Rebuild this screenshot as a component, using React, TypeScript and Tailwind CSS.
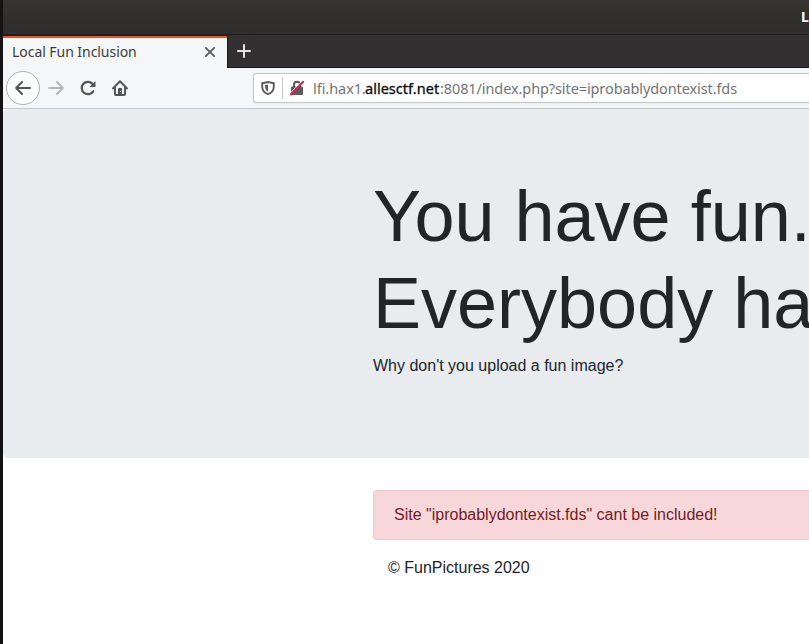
import React from 'react';

function TitleBar() {
  return (
    <div className="flex h-[35px] shrink-0 items-center overflow-hidden border-b border-[#1f1d1d] bg-linear-to-b from-[#353432] to-[#2f2d2d] pl-[798px]">
      <span className="font-['Noto_Sans',sans-serif] text-[14px] leading-none font-bold whitespace-nowrap text-white">Local Fun Inclusion</span>
    </div>
  );
}

function TabStrip() {
  return (
    <div className="flex h-[33px] shrink-0 bg-[#323030]">
      <div className="flex w-[224px] flex-col border-t border-[#1f1d1d] bg-[#f5f6f8]">
        <div className="h-[2px] shrink-0 bg-[#e95420]" />
        <div className="flex h-[28px] items-center justify-between pr-[11px] pl-[9px]">
          <span className="mb-px font-['Noto_Sans',sans-serif] text-[14px] leading-none tracking-[-0.05px] whitespace-nowrap text-[#3c3c3c]">Local Fun Inclusion</span>
          <svg width="12" height="12" viewBox="0 0 12 12" fill="none" stroke="#5a5a5a" strokeWidth="1.8" strokeLinecap="round">
            <path d="M1.800 1.800 10.200 10.200M10.200 1.800 1.800 10.200" />
          </svg>
        </div>
      </div>
      <div className="flex flex-1 border-b border-l border-[#1c1a1a] pt-[9px] pl-[9px]">
        <svg width="14" height="14" viewBox="0 0 14 14" fill="none" stroke="#e4e4e3" strokeWidth="2" strokeLinecap="round">
          <path d="M7 1v12M1 7h12" />
        </svg>
      </div>
    </div>
  );
}

function NavButtons() {
  return (
    <div className="flex w-[250px] shrink-0 items-center pl-[3px]">
      <div className="flex size-[34px] items-center justify-center rounded-full border border-[#b1b1b1] bg-[#fdfefe]">
        <svg width="16" height="16" viewBox="0 0 16 16" fill="none" stroke="#545454" strokeWidth="2" strokeLinecap="round" strokeLinejoin="round">
          <path d="M15 8H1.500M7 2 1.200 8 7 14" />
        </svg>
      </div>
      <svg className="ml-[8px]" width="16" height="16" viewBox="0 0 16 16" fill="none" stroke="#b5b6b7" strokeWidth="2" strokeLinecap="round" strokeLinejoin="round">
        <path d="M1 8h13.500M9 2l5.800 6L9 14" />
      </svg>
      <svg className="ml-[16px]" width="16" height="16" viewBox="0 0 16 16">
        <path d="M13.200 11.300A6.200 6.200 0 1 1 12.500 3.800" fill="none" stroke="#545454" strokeWidth="2.200" strokeLinecap="round" />
        <path d="M15.500 1v5.500a.6.6 0 0 1-.6.6H9.400z" fill="#545454" />
      </svg>
      <svg className="ml-[16px]" width="16" height="16" viewBox="0 0 16 16">
        <path d="M1 8.400 8 1.300l7 7.100M3 7.500V14a1 1 0 0 0 1 1h8a1 1 0 0 0 1-1V7.500" fill="none" stroke="#545454" strokeWidth="2" strokeLinecap="round" strokeLinejoin="round" />
        <path d="M6 15V9a1 1 0 0 1 1-1h2a1 1 0 0 1 1 1v6z" fill="#545454" />
        <path d="M8 11h1v1H8z" fill="#f5f6f8" />
      </svg>
    </div>
  );
}

function AddressBar() {
  return (
    <div className="flex h-[30px] flex-1 items-center overflow-hidden rounded-l-[3px] border border-r-0 border-[#c3c6ca] bg-white pl-[7px] shadow-[0_1px_3px_rgba(0,0,0,0.05)]">
      <svg className="shrink-0" width="14" height="14" viewBox="0 0 14 14">
        <path d="M7 1 12.800 2.200v3.500c0 3.500-2 6-5.800 7.500C3.200 11.700 1.200 9.200 1.200 5.700V2.200z" fill="none" stroke="#5b5b5b" strokeWidth="1.900" strokeLinejoin="round" />
        <path d="M7 3.500v7C5 9.400 4.100 7.800 4.100 5.700V4.100z" fill="#5b5b5b" />
      </svg>
      <div className="ml-[7px] h-[22px] w-px shrink-0 bg-[#c3c6ca]" />
      <svg className="ml-[7px] shrink-0" width="14" height="16" viewBox="0 0 14 16">
        <path d="M4 7V4.800a3 3 0 0 1 6 0V7" fill="none" stroke="#5b5b5b" strokeWidth="2" />
        <rect x="1" y="6.500" width="12" height="8.500" rx="1.200" fill="#5b5b5b" />
        <path d="M-.3 13.800 12.200 1.300" stroke="#fff" strokeWidth="1.200" />
        <path d="M.8 14.200 13.200 1.800" stroke="#f5154f" strokeWidth="2" strokeLinecap="round" />
      </svg>
      <div className="ml-[9px] flex font-['Noto_Sans',sans-serif] text-[14.500px] leading-none whitespace-nowrap text-[#747474]">
        <span className="w-[52px] tracking-[-0.050px]">lfi.hax1.</span>
        <span className="w-[75px] tracking-[0.020px] text-[#0c0c0d] [-webkit-text-stroke:0.300px_#0c0c0d]">allesctf.net</span>
        <span className="tracking-[-0.100px]">:8081/index.php?site=iprobablydontexist.fds</span>
      </div>
    </div>
  );
}

function Page() {
  return (
    <main className="flex-1 bg-white font-['Liberation_Sans',Arial,sans-serif] text-[16px] leading-[24px] whitespace-nowrap text-[#212529]">
      <section className="h-[349px] rounded-l-[5px] bg-[#e8ecef] pt-16 pl-[370px]">
        <h1 className="mb-[7px] text-[72px] leading-[87px]">
          You have fun.
          <br />
          Everybody has fun.
        </h1>
        <p>Why don't you upload a fun image?</p>
      </section>
      <div className="mt-8 ml-[370px] rounded-l-[4px] border border-r-0 border-[#f5c6cb] bg-[#f8d7da] py-3 pl-5 text-[#721c24]">
        Site "iprobablydontexist.fds" cant be included!
      </div>
      <footer className="mt-4 pl-[385px]">© FunPictures 2020</footer>
    </main>
  );
}

export default function App() {
  return (
    <div className="flex h-[644px] w-[809px] overflow-hidden bg-[#141212]">
      <div className="w-[3px] shrink-0 bg-[#141212]" />
      <div className="flex min-w-0 flex-1 flex-col overflow-hidden">
        <TitleBar />
        <TabStrip />
        <div className="flex h-[41px] shrink-0 items-center border-b border-[#c3c8cc] bg-[#f5f6f8]">
          <NavButtons />
          <AddressBar />
        </div>
        <Page />
      </div>
    </div>
  );
}
